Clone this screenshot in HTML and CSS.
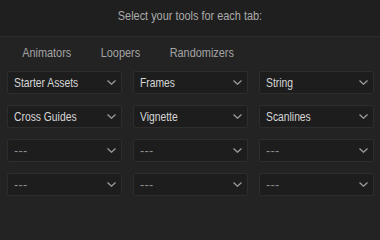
FILE: index.html
```html
<!DOCTYPE html>
<html>
<head>
<meta charset="utf-8">
<link rel="stylesheet" href="styles.css">
</head>
<body>
<div class="header"><span class="htxt">Select your tools for each tab:</span></div>
<div class="tabs">
  <span class="tab">Animators</span>
  <span class="tab">Loopers</span>
  <span class="tab">Randomizers</span>
</div>
<div class="grid">
  <div class="sel"><span class="val">Starter Assets</span><svg class="chev" width="9" height="5" viewBox="0 0 9 5"><path d="M0.5 0.5 L4.5 4.2 L8.5 0.5"/></svg></div>
  <div class="sel"><span class="val">Frames</span><svg class="chev" width="9" height="5" viewBox="0 0 9 5"><path d="M0.5 0.5 L4.5 4.2 L8.5 0.5"/></svg></div>
  <div class="sel"><span class="val">String</span><svg class="chev" width="9" height="5" viewBox="0 0 9 5"><path d="M0.5 0.5 L4.5 4.2 L8.5 0.5"/></svg></div>
  <div class="sel"><span class="val">Cross Guides</span><svg class="chev" width="9" height="5" viewBox="0 0 9 5"><path d="M0.5 0.5 L4.5 4.2 L8.5 0.5"/></svg></div>
  <div class="sel"><span class="val">Vignette</span><svg class="chev" width="9" height="5" viewBox="0 0 9 5"><path d="M0.5 0.5 L4.5 4.2 L8.5 0.5"/></svg></div>
  <div class="sel"><span class="val">Scanlines</span><svg class="chev" width="9" height="5" viewBox="0 0 9 5"><path d="M0.5 0.5 L4.5 4.2 L8.5 0.5"/></svg></div>
  <div class="sel"><span class="val empty">---</span><svg class="chev" width="9" height="5" viewBox="0 0 9 5"><path d="M0.5 0.5 L4.5 4.2 L8.5 0.5"/></svg></div>
  <div class="sel"><span class="val empty">---</span><svg class="chev" width="9" height="5" viewBox="0 0 9 5"><path d="M0.5 0.5 L4.5 4.2 L8.5 0.5"/></svg></div>
  <div class="sel"><span class="val empty">---</span><svg class="chev" width="9" height="5" viewBox="0 0 9 5"><path d="M0.5 0.5 L4.5 4.2 L8.5 0.5"/></svg></div>
  <div class="sel"><span class="val empty">---</span><svg class="chev" width="9" height="5" viewBox="0 0 9 5"><path d="M0.5 0.5 L4.5 4.2 L8.5 0.5"/></svg></div>
  <div class="sel"><span class="val empty">---</span><svg class="chev" width="9" height="5" viewBox="0 0 9 5"><path d="M0.5 0.5 L4.5 4.2 L8.5 0.5"/></svg></div>
  <div class="sel"><span class="val empty">---</span><svg class="chev" width="9" height="5" viewBox="0 0 9 5"><path d="M0.5 0.5 L4.5 4.2 L8.5 0.5"/></svg></div>
</div>
</body>
</html>
```
FILE: styles.css
```css
html, body {
  margin: 0;
  padding: 0;
  background: #232323;
  width: 380px;
  height: 204px;
  overflow: hidden;
  font-family: "Liberation Sans", Arial, sans-serif;
}
.header {
  height: 36px;
  line-height: 31px;
  text-align: center;
  font-size: 13.3px;
  color: #ababab;
  background: #1f1f1f;
  border-bottom: 1px solid #2b2b2b;
}
.htxt {
  display: inline-block;
  transform: scaleX(0.82);
  transform-origin: center center;
}
.tabs {
  display: flex;
  padding-left: 9px;
  height: 32px;
  line-height: 32px;
  font-size: 13.3px;
  color: #a3a3a3;
  transform: scaleX(0.82);
  transform-origin: left center;
}
.tab {
  padding: 0 18px;
}
.grid {
  display: grid;
  grid-template-columns: repeat(3, 115px);
  grid-auto-rows: 23px;
  column-gap: 11px;
  row-gap: 11px;
  padding: 0 6px 0 7px;
  margin-top: 2px;
}
.sel {
  box-sizing: border-box;
  display: flex;
  align-items: center;
  justify-content: space-between;
  background: #1d1d1d;
  border: 1px solid #2d2d2d;
  border-radius: 2px;
  padding: 0 5px 0 6px;
  overflow: hidden;
}
.val {
  display: inline-block;
  white-space: nowrap;
  font-size: 12.6px;
  color: #d6d6d6;
  transform: scaleX(0.82);
  transform-origin: left center;
}
.val.empty {
  color: #8c8c8c;
  font-size: 12.6px;
  transform: none;
  letter-spacing: 0.3px;
}
.chev {
  flex: none;
  fill: none;
  stroke: #9a9a9a;
  stroke-width: 1.3;
}
```
